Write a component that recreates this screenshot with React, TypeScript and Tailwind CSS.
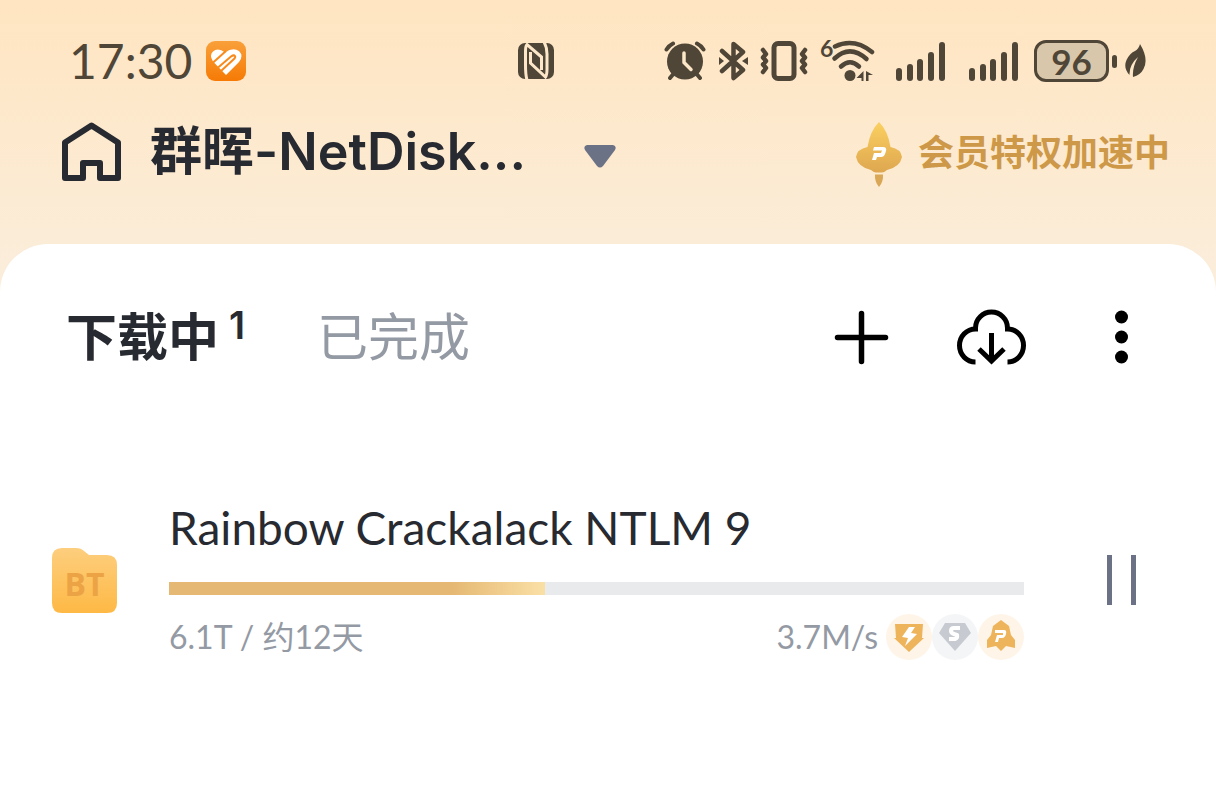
import React from "react";

function AppBadge() {
    return (
        <svg width="40" height="40" viewBox="0 0 40 40" aria-hidden="true">
            <defs>
                <linearGradient id="badge" x1="0" y1="0" x2="0" y2="1">
                    <stop offset="0" stopColor="#f9a03a" />
                    <stop offset="1" stopColor="#f67a05" />
                </linearGradient>
            </defs>
            <rect width="40" height="40" rx="9" fill="url(#badge)" />
            <path d="M20 34L7 20.500Q3 14 7 10.500Q12 6 19 11.500Q27 6 33 10Q38 15 33 21Z" fill="#fff" />
            <g stroke="#f88a1c" strokeWidth="2" fill="none">
                <path d="M6 22.500L20 10" />
                <path d="M15 30L28.500 17.500Q30 15.500 28.500 14.500Q27 14 25 15.500L11.500 27" />
            </g>
        </svg>
    )
}

function NfcIcon() {
    return (
        <svg width="36" height="36" viewBox="0 0 36 36" aria-hidden="true">
            <rect width="36" height="36" rx="7" fill="#4f4637" />
            <g fill="none" stroke="#fde7c8" strokeWidth="3">
                <path d="M9 37Q7.500 32 7.500 22V8Q7.500 3 9 1.500L23.500 14V27" />
                <path d="M12.500 9V20L27.500 34Q29 32 29 26V11Q29 4 26 -1" />
            </g>
        </svg>
    )
}

function AlarmIcon() {
    return (
        <svg width="42" height="40" viewBox="0 0 42 40" aria-hidden="true">
            <g stroke="#4f4637" strokeWidth="4" strokeLinecap="round" fill="none">
                <path d="M2.500 8.500Q5 4.500 9 2.500M39.500 8.500Q37 4.500 33 2.500M6 37L11 31M36 37L31 31" />
            </g>
            <circle cx="21" cy="20.500" r="18" fill="#4f4637" />
            <path d="M20 12V21.500L27 28.500" stroke="#fde7c8" strokeWidth="3.500" strokeLinecap="round" strokeLinejoin="round" fill="none" />
        </svg>
    )
}

function BluetoothIcon() {
    return (
        <svg width="29" height="40" viewBox="0 0 29 40" aria-hidden="true">
            <path d="M3 10L24 29L14.500 37V3L24 11L3 30" fill="none" stroke="#4f4637" strokeWidth="4.500" strokeLinecap="round" strokeLinejoin="round" />
            <path d="M0 16L5 20L0 24ZM29 16L23 20L29 24Z" fill="#4f4637" />
        </svg>
    )
}

function VibrateIcon() {
    return (
        <svg width="48" height="40" viewBox="0 0 48 40" fill="none" stroke="#4f4637" aria-hidden="true">
            <rect x="14" y="2.500" width="20" height="35" rx="4" strokeWidth="5" />
            <path d="M3 9L6 13L3 16.500L6 20L3 23.500L6 27L3 31M45 9L42 13L45 16.500L42 20L45 23.500L42 27L45 31" strokeWidth="4.500" strokeLinecap="round" strokeLinejoin="round" />
        </svg>
    )
}

function WifiIcon() {
    return (
        <svg width="55" height="56" viewBox="0 -6 55 56" aria-hidden="true">
            <g stroke="#4f4637" strokeWidth="4.500" strokeLinecap="round" fill="none">
                <path d="M15 7.500Q34 -1.500 52 13" />
                <path d="M14.500 19.500Q30 5 46.500 20" />
                <path d="M21 27.500Q30 19 39 27.500" />
            </g>
            <circle cx="30" cy="36.500" r="5.500" fill="#4f4637" />
            <path d="M43.500 32V42H41.500V39H36.500ZM46 32L53 36H48.500V42H46Z" fill="#4f4637" />
            <text x="0" y="18" fontSize="23" fontWeight="700" fill="#4f4637" fontFamily="Lato, sans-serif">6</text>
        </svg>
    )
}

function SignalIcon() {
    return (
        <svg width="49" height="39" viewBox="0 0 49 39" fill="#4f4637" aria-hidden="true">
            <rect x="0" y="26" width="6" height="13" rx="3" />
            <rect x="11" y="22" width="6" height="17" rx="3" />
            <rect x="21" y="17" width="6" height="22" rx="3" />
            <rect x="32" y="10" width="6" height="29" rx="3" />
            <rect x="43" y="0" width="6" height="39" rx="3" />
        </svg>
    )
}

function LeafIcon() {
    return (
        <svg width="21" height="34" viewBox="0 0 21 34" aria-hidden="true">
            <path d="M15 0Q24 15 18.500 25Q15.500 31 8 33Q7 24 13 13Q4 21 4.500 31Q-2 24 1.500 16Q5 9 10 7Q14 4.500 15 0Z" fill="#4f4637" />
        </svg>
    )
}

function StatusBar() {
    return (
        <div className="flex h-[50px] items-center pl-[69px] pr-[70px]">
            <time className="w-[125px] text-5xl leading-[50px] text-[#4f4637]">17:30</time>
            <div className="ml-3">
                <AppBadge />
            </div>
            <div className="ml-auto">
                <NfcIcon />
            </div>
            <div className="ml-[110px] flex items-center">
                <AlarmIcon />
                <div className="ml-[13px]"><BluetoothIcon /></div>
                <div className="ml-3"><VibrateIcon /></div>
                <div className="ml-3"><WifiIcon /></div>
                <div className="ml-[21px]"><SignalIcon /></div>
                <div className="ml-6"><SignalIcon /></div>
                <div className="ml-4 flex h-[42px] w-[75px] items-center justify-center rounded-xl border-3 border-[#4f4637] bg-[#d9c7ab] text-[35px] font-bold text-[#4f4637]">
                    96
                </div>
                <div className="ml-[3px] h-[13px] w-[5px] rounded-full bg-[#4f4637]" />
                <div className="ml-2"><LeafIcon /></div>
            </div>
        </div>
    )
}

function RocketIcon() {
    return (
        <svg className="mt-1" width="46" height="65" viewBox="0 0 46 65" aria-hidden="true">
            <defs>
                <linearGradient id="rocket" x1="0" y1="0" x2="0" y2="1">
                    <stop offset="0" stopColor="#fbd060" />
                    <stop offset="1" stopColor="#dea750" />
                </linearGradient>
            </defs>
            <path d="M23 0Q32 9 34.500 25Q45 27 46 35Q44 45 31 48Q28 50.500 26 50.500H20Q18 50.500 15 48Q2 45 0 35Q1 27 11.500 25Q14 9 23 0Z" fill="url(#rocket)" />
            <path d="M19 52.500H27Q27.500 60 23 65Q18.500 60 19 52.500Z" fill="#d9a756" />
            <path d="M18 25H27Q31 25 30 29L29 32Q28 35 25 35H21L20 38H16L18 31H25L26 28.500H17Z" fill="#fff" />
        </svg>
    )
}

function Header() {
    return (
        <header className="flex h-[68px] items-center pl-[61px] pr-[46px]">
            <a href="#home" aria-label="Home">
                <svg width="61" height="60" viewBox="0 0 61 60" fill="none" stroke="#272a30" strokeWidth="6" strokeLinejoin="round">
                    <path d="M4 20.500L30.500 3.500L57 20.500V56H39V41H22V56H4Z" />
                </svg>
            </a>
            <button className="ml-7 flex items-center font-['Inter','Noto_Sans_CJK_SC',sans-serif] text-[52px] leading-[60px] font-bold text-[#272a30]">
                <span className="whitespace-nowrap">
                    群晖<span className="font-semibold">-NetDisk...</span>
                </span>
                <svg className="ml-[58px] mt-2" width="32" height="23" viewBox="0 0 32 23" aria-hidden="true">
                    <path d="M3 0H29Q33 1 31 5L19 21Q16 24 13 21L1 5Q-1 1 3 0Z" fill="#6b7286" />
                </svg>
            </button>
            <a href="#vip" className="ml-auto flex items-center gap-4 text-4xl font-bold text-[#cd9848]">
                <RocketIcon />
                <span className="whitespace-nowrap">会员特权加速中</span>
            </a>
        </header>
    )
}

function Toolbar() {
    return (
        <div className="flex h-[70px] items-center pl-[66px] pr-[60px]">
            <nav className="flex items-center text-[51px] leading-[68px]">
                <button className="flex font-bold text-[#272a30]">
                    下载中
                    <sup className="top-0 ml-[10px] font-['Inter',sans-serif] text-[38px] leading-[44px] font-semibold">1</sup>
                </button>
                <button className="ml-[72px] text-[#949aa4]">已完成</button>
            </nav>
            <div className="ml-auto flex gap-[60px]">
                <button aria-label="Add" className="flex h-[70px] w-[70px] items-center justify-center">
                    <svg width="56" height="56" viewBox="0 0 56 56" stroke="#000" strokeWidth="5.500" strokeLinecap="round">
                        <path d="M28.500 4.500V52.500M4.500 28.500H52.500" />
                    </svg>
                </button>
                <button aria-label="Cloud download" className="flex h-[70px] w-[70px] items-center justify-center">
                    <svg width="70" height="58" viewBox="0 0 70 58" fill="none" stroke="#000" strokeWidth="5">
                        <path d="M19.500 54A16 16.500 0 0 1 19.500 21V20A16 16 0 0 1 51.500 20V21A16 16.500 0 0 1 51.500 54" />
                        <path d="M35.500 25V53M23 41L35.500 53L48 41" />
                    </svg>
                </button>
                <button aria-label="More" className="flex h-[70px] w-[70px] items-center justify-center">
                    <svg width="14" height="54" viewBox="0 0 14 54">
                        <circle cx="7.500" cy="7" r="6.500" />
                        <circle cx="7.500" cy="27" r="6.500" />
                        <circle cx="7.500" cy="47" r="6.500" />
                    </svg>
                </button>
            </div>
        </div>
    )
}

function FolderIcon() {
    return (
        <svg className="shrink-0" width="65" height="65" viewBox="0 0 65 65" aria-hidden="true">
            <defs>
                <linearGradient id="folder" x1="0" y1="0" x2="0" y2="1">
                    <stop offset="0" stopColor="#fdce7e" />
                    <stop offset="1" stopColor="#feb945" />
                </linearGradient>
            </defs>
            <path d="M0 10Q0 0 10 0H24Q29 0 32 3L37 7H55Q65 7 65 17V55Q65 65 55 65H10Q0 65 0 55Z" fill="url(#folder)" />
            <text x="32.500" y="48" textAnchor="middle" fontSize="32" fontWeight="700" fill="#eca345" fontFamily="Open Sans, sans-serif">BT</text>
        </svg>
    )
}

function SpeedBadges() {
    return (
        <div className="ml-2 flex">
            <svg width="46" height="46" viewBox="0 0 46 46" aria-hidden="true">
                <circle cx="23" cy="23" r="23" fill="#fef5e8" />
                <path d="M9 10H37L36 24H38L23 38L8 24H10Z" fill="#eeb45c" />
                <path d="M23 13L16 23L22 24L19 32L31 20L25 19L29 13Z" fill="#fff" />
            </svg>
            <svg width="46" height="46" viewBox="0 0 46 46" aria-hidden="true">
                <circle cx="23" cy="23" r="23" fill="#f4f5f6" />
                <path d="M13 9H33L39 19L23 37L7 19Z" fill="#c7cbd1" />
                <path d="M28 14H22Q19 14 19 17Q19 19 22 20L25 21Q26 24 23 25H17" fill="none" stroke="#fff" strokeWidth="4" />
            </svg>
            <svg width="46" height="46" viewBox="0 0 46 46" aria-hidden="true">
                <circle cx="23" cy="23" r="23" fill="#fef5e8" />
                <path d="M23 6L31 12L33 21L37 26V34L28 32L23 37L18 32L9 34V26L13 21L15 12Z" fill="#eeb45c" />
                <path d="M17 16H26Q29 16 28 20Q27 24 24 24H21L20 28H17L19 21H25V19H17Z" fill="#fff" />
            </svg>
        </div>
    )
}

function DownloadItem({ name, size, speed, percent }: { name: string, size: string, speed: string, percent: number }) {
    return (
        <li className="flex items-center pl-[52px] pr-[60px]">
            <FolderIcon />
            <div className="ml-[52px] min-w-0 flex-1">
                <h2 className="whitespace-nowrap text-[46px] leading-[56px] text-[#272a30]">{name}</h2>
                <div className="mt-[26px] h-[13px] bg-[#e8eaeb]">
                    <div
                        className="h-full bg-linear-to-r from-[#e5b873] from-75% to-[#fae0a6]"
                        style={{ width: `${percent}%` }}
                    />
                </div>
                <div className="mt-[19px] flex h-[46px] items-center text-[32px] text-[#949aa4]">
                    <span>{size}</span>
                    <span className="ml-auto">{speed}</span>
                    <SpeedBadges />
                </div>
            </div>
            <button aria-label="Pause" className="ml-[62px] flex h-[70px] w-[70px] items-center justify-center gap-[19px]">
                <span className="h-[50px] w-[5px] bg-[#6b7286]" />
                <span className="h-[50px] w-[5px] bg-[#6b7286]" />
            </button>
        </li>
    )
}

export default function App() {
    const downloads = [
        {
            name: "Rainbow Crackalack NTLM 9",
            size: "6.1T / 约12天",
            speed: "3.7M/s",
            percent: 44
        }
    ]

    return (
        <div className="flex min-h-screen flex-col bg-linear-to-b from-[#ffe5c1] to-[#faeedd] to-[300px] pt-9 font-['Lato','Noto_Sans_CJK_SC',sans-serif]">
            <StatusBar />
            <div className="mt-8">
                <Header />
            </div>
            <main className="mt-[58px] flex-1 rounded-t-[48px] bg-white pt-[58px]">
                <Toolbar />
                <ul className="mt-32">
                    {downloads.map((item) => (
                        <DownloadItem key={item.name} {...item} />
                    ))}
                </ul>
            </main>
        </div>
    )
}
